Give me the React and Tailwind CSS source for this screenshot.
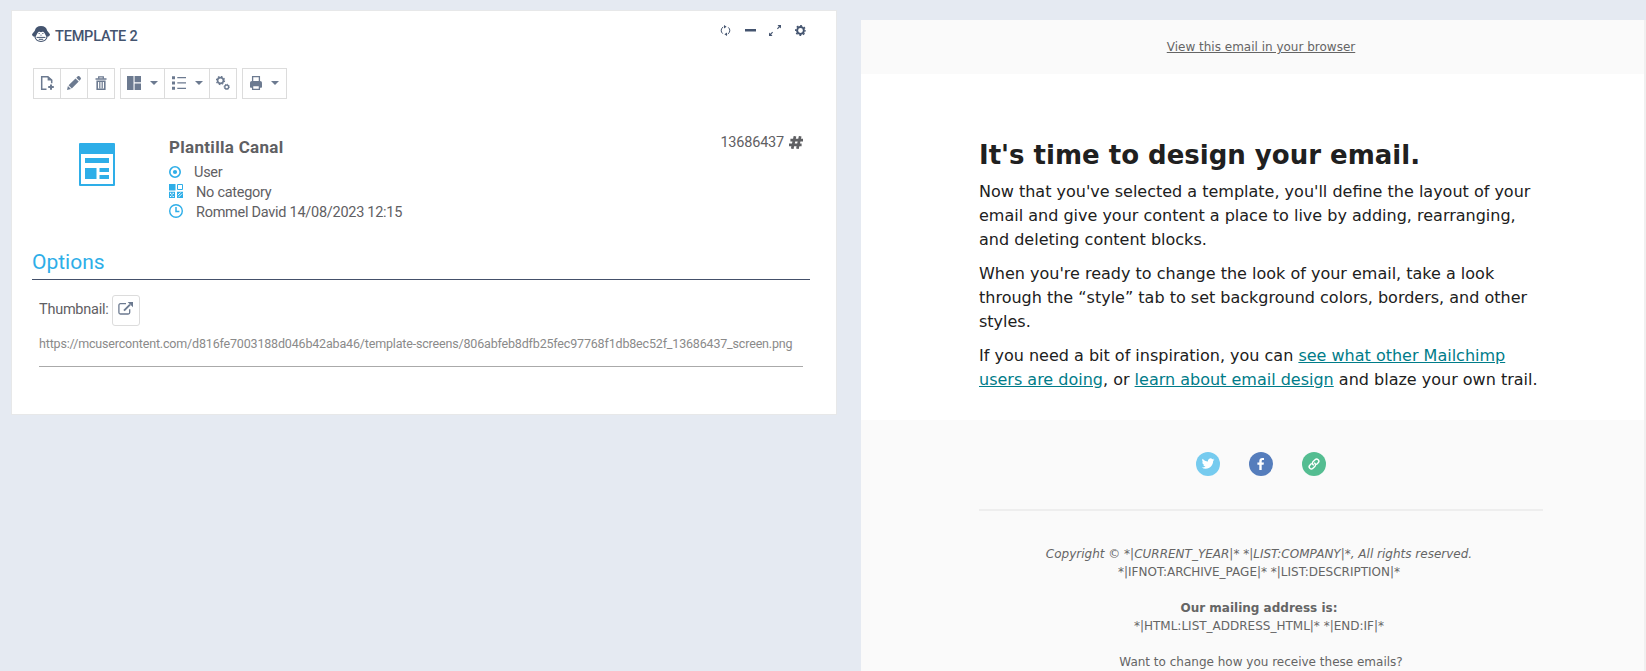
function MonkeyIcon() {
  return (
    <svg className="block h-4 w-[18px] shrink-0" viewBox="0 0 18 16">
      <path fill="#44546f" d="M9 0C5.600 0 3.300 2 2.800 4.800L0 8.200c.2 1.500 1.100 2.300 2.400 2.400C2.900 13.800 5.500 16 9 16s6.100-2.200 6.600-5.400c1.300-.1 2.200-.9 2.400-2.400l-2.800-3.400C14.700 2 12.400 0 9 0z" />
      <path fill="#fff" d="M5.500 7h7l1.900 3.700c0 2.300-2.400 4.200-5.400 4.200s-5.400-1.900-5.400-4.200zM5.700 7.200c0-1.300 2-2 3.300-.9 1.300-1.100 3.300-.4 3.300.9z" />
      <path fill="#44546f" d="M6.600 7h1.100v1.100H6.600zM10.300 7h1.100v1.100h-1.100zM7.900 8.800h.8v.7h-.8zM9.300 8.800h.8v.7h-.8z" />
      <path fill="none" stroke="#44546f" strokeWidth="1" d="M4.600 11.400h8.800M6.800 13.300h4.400" />
    </svg>
  );
}

function Caret() {
  return (
    <svg className="block h-1 w-2" viewBox="0 0 8 4" fill="#6c7a90">
      <path d="M0 0h8L4 4z" />
    </svg>
  );
}

function FilePlusIcon() {
  return (
    <svg className="block size-[14px]" viewBox="0 0 14 14" fill="none" stroke="#6c7a90" strokeWidth="1.500">
      <path d="M6.500 13.200H1.700V.8h6.100l3.900 3.400v3" />
      <path d="M7.600 0v4.400H12.400z" fill="#6c7a90" stroke="none" />
      <path d="M11 8.400v5.400M8.200 11.100h5.600" strokeWidth="2" />
    </svg>
  );
}

function PencilIcon() {
  return (
    <svg className="block size-[14px]" viewBox="0 0 14 14" fill="#6c7a90">
      <path d="M0 14l.9-4 3.100 3.100zM1.600 9.200l6.900-6.800 3.200 3.200-6.900 6.800zM9.300 1.700l1.200-1.200c.6-.6 1.500-.6 2.100 0l.9.9c.6.6.6 1.500 0 2.100l-1.100 1.300z" />
    </svg>
  );
}

function TrashIcon() {
  return (
    <svg className="block size-[14px]" viewBox="0 0 14 14" fill="none" stroke="#6c7a90">
      <path d="M1.500 3h11" strokeWidth="1.500" />
      <path d="M4.700 2.800V.8h4.600v2" strokeWidth="1.300" />
      <path d="M3.200 5.200h7.600v8H3.200z" strokeWidth="1.600" />
      <path d="M5.800 6v6.500M8.200 6v6.500" strokeWidth="1.200" />
    </svg>
  );
}

function LayoutIcon() {
  return (
    <svg className="block size-[14px]" viewBox="0 0 14 14" fill="#6c7a90">
      <path d="M0 0h6.500v14H0zM7.600 0H14v6.300H7.600zM7.600 7.400H14V14H7.600z" />
    </svg>
  );
}

function ListIcon() {
  return (
    <svg className="block size-[14px]" viewBox="0 0 14 14" fill="#6c7a90">
      <path d="M0 .2h3v3H0zM0 5.500h3v3H0zM0 10.800h3v3H0zM5.300 1h8.700v1.300H5.300zM5.300 6.300h8.700v1.300H5.300zM5.300 11.700h8.700V13H5.300z" />
    </svg>
  );
}

function GearsIcon() {
  return (
    <svg className="block size-[14px]" viewBox="0 0 14 14" fill="none" stroke="#6c7a90">
      <circle cx="4.500" cy="4.500" r="2.900" strokeWidth="1.600" />
      <circle cx="4.500" cy="4.500" r="4" strokeWidth="1.300" strokeDasharray="1.570 1.570" />
      <circle cx="10.700" cy="10.900" r="1.900" strokeWidth="1.300" />
      <circle cx="10.700" cy="10.900" r="2.700" strokeWidth=".9" strokeDasharray="1.060 1.060" />
    </svg>
  );
}

function PrintIcon() {
  return (
    <svg className="block h-[14px] w-3" viewBox="0 0 12 14">
      <path fill="none" stroke="#6c7a90" strokeWidth="1.300" d="M2.600 5V.7h6.800V5" />
      <path fill="#6c7a90" d="M2 5h8c1.300 0 2 .9 2 2.300V11c0 .5-.3.800-.8.800H.8c-.5 0-.8-.3-.8-.8V7.300C0 5.900.7 5 2 5z" />
      <path fill="#fff" stroke="#6c7a90" strokeWidth="1.300" d="M2.600 9.700h6.800v3.700H2.600z" />
    </svg>
  );
}

function TemplateIcon() {
  return (
    <svg className="block h-[43px] w-9" viewBox="0 0 36 43">
      <path fill="#2eaee8" fillRule="evenodd" d="M1 0h34a1 1 0 0 1 1 1v41a1 1 0 0 1-1 1H1a1 1 0 0 1-1-1V1a1 1 0 0 1 1-1zm1 11v30h32V11z" />
      <path fill="#2eaee8" d="M6 15h24v5H6zM6 25h11.500v11H6zM20.500 25H30v4h-9.500zM20.500 32H30v4h-9.500z" />
    </svg>
  );
}

const buttonSizes = {
  icon: "w-7",
  menu: "w-[45px] gap-[9px]",
  menuWide: "w-[46px] gap-[9px]",
};

function ToolButton({ children, size = "icon" }) {
  return (
    <button className={`-ml-px flex h-[31px] items-center justify-center border border-[#dcdcdc] pb-px first:ml-0 ${buttonSizes[size]}`}>
      {children}
    </button>
  );
}

function Toolbar() {
  return (
    <div className="mt-[22px] ml-px flex gap-[5px]">
      <div className="flex">
        <ToolButton><FilePlusIcon /></ToolButton>
        <ToolButton><PencilIcon /></ToolButton>
        <ToolButton><TrashIcon /></ToolButton>
      </div>
      <div className="flex">
        <ToolButton size="menu"><LayoutIcon /><Caret /></ToolButton>
        <ToolButton size="menuWide"><ListIcon /><Caret /></ToolButton>
        <ToolButton><GearsIcon /></ToolButton>
      </div>
      <div className="flex">
        <ToolButton size="menu"><PrintIcon /><Caret /></ToolButton>
      </div>
    </div>
  );
}

function WindowControls() {
  return (
    <div className="-mt-px mr-1 flex items-start">
      <svg className="mr-[14px] block size-[11px]" viewBox="0 0 11 11" fill="none" stroke="#44546f" strokeWidth="1">
        <path d="M2.700 8.600A4 4 0 0 1 3.200 2M8.300 2.400A4 4 0 0 1 7.800 9" />
        <path d="M4 0l2.600 1.700L4 3.400zM7 7.600v3.400L4.400 9.300z" fill="#44546f" stroke="none" />
      </svg>
      <svg className="mr-[13px] block h-[11px] w-[11px]" viewBox="0 0 11 11">
        <path d="M0 4h11v2.500H0z" fill="#44546f" />
      </svg>
      <svg className="mr-[14px] block h-[11px] w-3" viewBox="0 0 12 11" fill="#44546f">
        <path d="M8.500 0H12v3.500l-1.200-1.200L8.700 4.200l-.7-.7 1.800-2.100zM0 7.500l1.200 1.200 2.100-1.900.7.700-1.800 2.100L3.500 11H0z" />
      </svg>
      <svg className="block size-[11px]" viewBox="0 0 11 11" fill="none" stroke="#44546f">
        <circle cx="5.500" cy="5.500" r="3.400" strokeWidth="2" />
        <circle cx="5.500" cy="5.500" r="4.700" strokeWidth="1.500" strokeDasharray="1.846 1.846" strokeDashoffset=".9" />
      </svg>
    </div>
  );
}

function Summary() {
  return (
    <div className="mt-[37px] flex text-[14.5px] leading-5 tracking-[-0.27px] text-[#5f6063]">
      <div className="mt-[7px] ml-[47px] w-[90px]"><TemplateIcon /></div>
      <div className="flex-1">
        <h2 className="text-[17px] leading-[22px] font-bold tracking-[0.3px]">Plantilla Canal</h2>
        <div className="mt-[5px] flex h-5">
          <svg className="mt-[3px] mr-[13px] block size-3" viewBox="0 0 12 12">
            <circle cx="6" cy="6" r="5.200" fill="none" stroke="#2eaee8" strokeWidth="1.600" />
            <circle cx="6" cy="6" r="2.100" fill="#2eaee8" />
          </svg>
          User
        </div>
        <div className="flex h-5">
          <svg className="mt-px mr-[13px] block size-[14px]" viewBox="0 0 14 14">
            <path fill="#2eaee8" d="M0 0h6.500v6.500H0zM0 7.700h6V14H0zM8 7.700h6V14H8z" />
            <path fill="none" stroke="#2eaee8" d="M8.500.5h5v5h-5z" />
            <path fill="#fff" d="M1 8.700h1.200v1.200H1zM3.600 8.700h1.200v1.200H3.600zM2.300 10.200h1.200v1.200H2.300zM1 11.900h1.200v1.200H1zM3.600 11.900h1.200v1.200H3.600z" />
            <path stroke="#fff" strokeWidth=".9" d="M8.800 11.200l2.700-2.700M9.500 13.200l3.700-3.700" />
          </svg>
          No category
        </div>
        <div className="flex h-5">
          <svg className="mt-px mr-[13px] block size-[14px]" viewBox="0 0 14 14" fill="none" stroke="#2eaee8">
            <circle cx="7" cy="7" r="6.300" strokeWidth="1.400" />
            <path d="M7 3v4.500h3.400" strokeWidth="1.500" />
          </svg>
          Rommel David 14/08/2023 12:15
        </div>
      </div>
      <div className="mt-[-3px] mr-[7px] flex h-5 items-center gap-[5px] tracking-[-0.2px]">
        13686437
        <svg className="mb-px block h-[13px] w-[14px]" viewBox="0 0 14 13" fill="none" stroke="#5f6063" strokeWidth="2.700">
          <path d="M6 .2L3.200 12.800M11.200.2L8.400 12.800M1.400 4.200H14M0 8.800h12.600" />
        </svg>
      </div>
    </div>
  );
}

function TemplatePanel() {
  return (
    <section className="mt-[10px] ml-[11px] h-[405px] w-[826px] shrink-0 border border-[#e7e8e9] bg-white pt-[15px] pr-[26px] pl-5 font-[Roboto,sans-serif]">
      <header className="flex h-5 justify-between">
        <div className="flex gap-[5px]">
          <MonkeyIcon />
          <h1 className="pt-px text-[14.5px] leading-5 font-medium tracking-[-0.2px] text-[#44546f]">TEMPLATE 2</h1>
        </div>
        <WindowControls />
      </header>
      <Toolbar />
      <Summary />
      <h3 className="mt-[26px] h-[31px] border-b border-[#44506a] pt-px text-[21px] leading-[25px] text-[#2eaee8]">Options</h3>
      <div className="mt-[15px] ml-[7px] flex gap-1 text-[14.5px] tracking-[-0.25px] text-[#5f6063]">
        <span className="mt-[5px] leading-5">Thumbnail:</span>
        <button className="flex h-[31px] w-7 justify-center rounded-[3px] border border-[#dcdcdc] pt-[6px] pr-px">
          <svg className="block h-[13px] w-[15px]" viewBox="0 0 15 13" fill="none" stroke="#6c7a90" strokeWidth="1.300">
            <path d="M8 1.700H2.400A1.500 1.500 0 0 0 .9 3.200v7.300A1.500 1.500 0 0 0 2.400 12h7.800a1.500 1.500 0 0 0 1.500-1.500V7.300" />
            <path d="M6 8.600L12 2.600" strokeWidth="2" />
            <path d="M9.700 0H15v5.300z" fill="#6c7a90" stroke="none" />
          </svg>
        </button>
      </div>
      <div className="mx-[7px] mt-2 h-[33px] border-b border-[#aaaaaa] text-[12.5px] leading-5 tracking-[-0.17px] whitespace-nowrap text-[#8a8a8a]">
        https://mcusercontent.com/d816fe7003188d046b42aba46/template-screens/806abfeb8dfb25fec97768f1db8ec52f_13686437_screen.png
      </div>
    </section>
  );
}

function EmailPreview() {
  return (
    <section className="mt-5 ml-6 flex h-[651px] w-[783px] shrink-0 justify-start overflow-hidden bg-[#fafafa] font-['DejaVu_Sans',sans-serif]">
      <div className="w-[800px] shrink-0">
        <div className="h-[54px] pt-[18px] text-center text-[12px] leading-[18px] text-[#656565]">
          <a className="underline">View this email in your browser</a>
        </div>
        <div className="h-[346px] bg-white px-[118px] pt-[65px] text-[16px] leading-6 text-[#202020]">
          <h1 className="mb-2 text-[26px] leading-[32.500px] font-bold">It's time to design your email.</h1>
          <p className="mb-[10px]">Now that you've selected a template, you'll define the layout of your email and give your content a place to live by adding, rearranging, and deleting content blocks.</p>
          <p className="mb-[10px]">When you're ready to change the look of your email, take a look through the “style” tab to set background colors, borders, and other styles.</p>
          <p>If you need a bit of inspiration, you can <a className="text-[#007c89] underline">see what other Mailchimp users are doing</a>, or <a className="text-[#007c89] underline">learn about email design</a> and blaze your own trail.</p>
        </div>
        <div className="flex justify-center gap-[29px] pt-8">
          <svg className="block size-6" viewBox="0 0 24 24">
            <circle cx="12" cy="12" r="12" fill="#76cbef" />
            <path fill="#fff" transform="translate(5.700 5.200) scale(.53)" d="M23.950 4.570a10 10 0 0 1-2.820.77 4.960 4.960 0 0 0 2.160-2.720c-.95.550-2 .95-3.130 1.180a4.920 4.920 0 0 0-8.380 4.480C7.690 8.090 4.070 6.130 1.640 3.160a4.820 4.820 0 0 0-.67 2.480c0 1.710.87 3.210 2.190 4.100a4.900 4.900 0 0 1-2.230-.62v.06a4.920 4.920 0 0 0 3.950 4.830 5 5 0 0 1-2.210.08 4.940 4.940 0 0 0 4.600 3.420A9.870 9.870 0 0 1 0 19.540a13.990 13.990 0 0 0 7.560 2.210c9.050 0 14-7.500 14-13.980 0-.21 0-.42-.02-.63a9.940 9.940 0 0 0 2.410-2.570z" />
          </svg>
          <svg className="block size-6" viewBox="0 0 24 24">
            <circle cx="12" cy="12" r="12" fill="#557dbc" />
            <path fill="#fff" d="M10.300 18v-5.200H8.400v-2.300h1.900V9c0-2 1.200-3.100 3-3.100.8 0 1.500.1 1.700.1v2h-1.100c-.9 0-1.200.5-1.200 1.100v1.400h2.200l-.3 2.300h-1.900V18z" />
          </svg>
          <svg className="block size-6" viewBox="0 0 24 24">
            <circle cx="12" cy="12" r="12" fill="#54bd91" />
            <g transform="rotate(-45 12 12)" fill="none" stroke="#fff" strokeWidth="1.400" strokeLinecap="round">
              <path d="M10.300 9.900H8.200a2.200 2.200 0 0 0 0 4.400h2.700c1.500 0 2.400-1.200 2.200-2.500" />
              <path d="M13.700 14.100h2.100a2.200 2.200 0 0 0 0-4.400h-2.700c-1.500 0-2.400 1.200-2.200 2.500" />
            </g>
          </svg>
        </div>
        <hr className="mx-[118px] mt-[33px] border-t-2 border-[#eeeeee]" />
        <div className="pt-[34px] text-center text-[12px] leading-[18px] whitespace-nowrap text-[#656565]">
          <div className="pr-1">
            <p className="italic">Copyright © *|CURRENT_YEAR|* *|LIST:COMPANY|*, All rights reserved.</p>
            <p>*|IFNOT:ARCHIVE_PAGE|* *|LIST:DESCRIPTION|*</p>
            <p className="mt-[18px] font-bold">Our mailing address is:</p>
            <p>*|HTML:LIST_ADDRESS_HTML|* *|END:IF|*</p>
          </div>
          <p className="mt-[18px]">Want to change how you receive these emails?</p>
        </div>
      </div>
    </section>
  );
}

export default function App() {
  return (
    <main className="flex h-[671px] w-[1646px] items-start overflow-hidden bg-[#e5eaf2]">
      <TemplatePanel />
      <EmailPreview />
      <div className="mt-5 h-[651px] w-0.5 bg-[#f0f0f0]" />
    </main>
  );
}
